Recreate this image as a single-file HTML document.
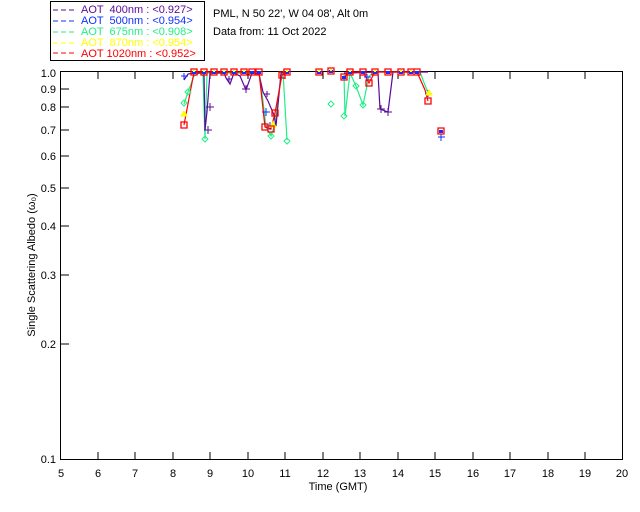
<!DOCTYPE html>
<html><head><meta charset="utf-8"><style>
html,body{margin:0;padding:0;background:#fff;width:640px;height:512px;overflow:hidden}
svg{display:block}
text{font-family:"Liberation Sans",sans-serif;font-size:11px;white-space:pre}
</style></head><body>
<svg width="640" height="512" viewBox="0 0 640 512" xmlns="http://www.w3.org/2000/svg">
<rect x="50.5" y="1.5" width="154" height="59" fill="none" stroke="#000"/>
<g font-size="11">
<line x1="53" y1="10" x2="77" y2="10" stroke="#5a0a9a" stroke-dasharray="5,3"/><text x="81" y="13" fill="#5a0a9a">AOT  400nm : &lt;0.927&gt;</text>
<line x1="53" y1="21" x2="77" y2="21" stroke="#1030ff" stroke-dasharray="5,3"/><text x="81" y="24" fill="#1030ff">AOT  500nm : &lt;0.954&gt;</text>
<line x1="53" y1="32" x2="77" y2="32" stroke="#22ee88" stroke-dasharray="5,3"/><text x="81" y="35" fill="#22ee88">AOT  675nm : &lt;0.908&gt;</text>
<line x1="53" y1="43" x2="77" y2="43" stroke="#ffff00" stroke-dasharray="5,3"/><text x="81" y="46" fill="#ffff00">AOT  870nm : &lt;0.954&gt;</text>
<line x1="53" y1="53" x2="77" y2="53" stroke="#ff0000" stroke-dasharray="5,3"/><text x="81" y="57" fill="#ff0000">AOT 1020nm : &lt;0.952&gt;</text>
</g>
<text x="213" y="17">PML, N 50 22', W 04 08', Alt 0m</text>
<text x="213" y="35">Data from: 11 Oct 2022</text>
<rect x="60.5" y="71.5" width="562" height="388" fill="none" stroke="#000"/>
<g stroke="#000">
<path d="M98 72v7M135 72v7M173 72v7M210 72v7M248 72v7M285 72v7M323 72v7M360 72v7M398 72v7M435 72v7M473 72v7M510 72v7M548 72v7M585 72v7"/>
<path d="M98 459v-7M135 459v-7M173 459v-7M210 459v-7M248 459v-7M285 459v-7M323 459v-7M360 459v-7M398 459v-7M435 459v-7M473 459v-7M510 459v-7M548 459v-7M585 459v-7"/>
<path d="M61 89h8M61 107h8M61 130h8M61 156h8M61 188h8M61 226h8M61 275h8M61 344h8"/>
</g>
<g font-size="11" text-anchor="end">
<text x="56" y="77">1.0</text><text x="56" y="93">0.9</text><text x="56" y="111">0.8</text><text x="56" y="134">0.7</text><text x="56" y="160">0.6</text><text x="56" y="192">0.5</text><text x="56" y="230">0.4</text><text x="56" y="279">0.3</text><text x="56" y="348">0.2</text><text x="56" y="463">0.1</text>
</g>
<g font-size="11" text-anchor="middle">
<text x="61" y="477">5</text><text x="98" y="477">6</text><text x="135" y="477">7</text><text x="173" y="477">8</text><text x="210" y="477">9</text><text x="248" y="477">10</text><text x="285" y="477">11</text><text x="323" y="477">12</text><text x="360" y="477">13</text><text x="398" y="477">14</text><text x="435" y="477">15</text><text x="473" y="477">16</text><text x="510" y="477">17</text><text x="548" y="477">18</text><text x="585" y="477">19</text><text x="622" y="477">20</text>
<text x="338" y="490">Time (GMT)</text>
</g>
<text transform="translate(35,265) rotate(-90)" text-anchor="middle" font-size="11">Single Scattering Albedo (ω₀)</text>
<g fill="none" stroke-width="1.2">
<polyline stroke="#22ee88" points="184,104 188,92 194,76 200,73 203,76 205,139 207,73 214,73 224,73 234,73 244,73 252,73 259,74 263,101 266,127 271,136 275,124 281,76 283,72 287,140"/>
<polyline stroke="#22ee88" points="344,75 345,116 350,73 356,86 363,105 369,76 375,72 420,72 428,93"/>
<polyline stroke="#5a0a9a" points="184,80 188,74 194,73 204,73 205,130 207,112 210,73 224,73 226,78 230,84 234,73 240,76 246,90 252,73 259,74 263,92 268,101 274,115 276,126 281,73 287,72"/>
<polyline stroke="#5a0a9a" points="344,73 350,73 375,72 378,73 380,109 388,112 393,72 428,72"/>
<polyline stroke="#ff0000" points="184,125 194,72 204,72 214,72 224,72 234,72 244,72 252,72 259,72 265,127 271,129 275,113 282,75 287,72"/>
<polyline stroke="#ff0000" points="344,77 350,72 356,72 363,72 369,83 375,72 417,72 425,90 428,101"/>
</g>
<g fill="none" stroke="#22ee88">
<path d="M184 100l3 3-3 3-3-3zM188 89l3 3-3 3-3-3zM205 136l3 3-3 3-3-3zM271 133l3 3-3 3-3-3zM287 138l3 3-3 3-3-3zM331 101l3 3-3 3-3-3zM344 113l3 3-3 3-3-3zM356 83l3 3-3 3-3-3zM363 102l3 3-3 3-3-3z"/>
</g>
<g stroke="#5a0a9a">
<path d="M204 130h8M208 126v8M206 107h8M210 103v8M226 79h6M229 76v6M242 89h8M246 85v8M264 94h6M267 91v6M377 109h8M381 105v8M384 112h8M388 108v8"/>
</g>
<g stroke="#1030ff">
<path d="M181 76h7M184 73v7M262 112h8M266 108v8M266 126h8M270 122v8M425 94h7M428 90v7M438 137h7M441 134v7M364 77h7M367 74v7"/>
</g>
<g fill="#ffff00" stroke="#ffff00">
<path d="M184 111l3 5h-6zM273 122l3 5h-6zM429 90l3 5h-6z"/>
</g>
<g fill="#1030ff">
<path d="M192 71h4v3h-4zM202 71h4v3h-4zM212 71h4v3h-4zM222 71h4v3h-4zM232 71h4v3h-4zM242 71h4v3h-4zM250 71h4v3h-4zM257 71h4v3h-4zM285 71h4v3h-4zM317 71h4v3h-4zM329 70h4v3h-4zM348 71h4v3h-4zM361 71h4v3h-4zM373 71h4v3h-4zM386 71h4v3h-4zM399 71h4v3h-4zM409 71h4v3h-4zM415 71h4v3h-4zM342 76h4v3h-4zM439 130h4v3h-4z"/>
</g>
<g fill="#ffff00">
<path d="M193 70h2v2h-2zM203 70h2v2h-2zM213 70h2v2h-2zM223 70h2v2h-2zM233 70h2v2h-2zM243 70h2v2h-2zM286 70h2v2h-2zM318 70h2v2h-2zM330 69h2v2h-2zM349 70h2v2h-2zM374 70h2v2h-2zM400 70h2v2h-2zM410 70h2v2h-2z"/>
</g>
<g fill="none" stroke="#ff0000" stroke-width="1.3">
<path d="M181 122h6v6h-6zM191 69h6v6h-6zM201 69h6v6h-6zM211 69h6v6h-6zM221 69h6v6h-6zM231 69h6v6h-6zM241 69h6v6h-6zM249 69h6v6h-6zM256 69h6v6h-6zM262 124h6v6h-6zM268 126h6v6h-6zM272 110h6v6h-6zM279 72h6v6h-6zM284 69h6v6h-6zM316 69h6v6h-6zM328 68h6v6h-6zM341 74h6v6h-6zM347 69h6v6h-6zM360 69h6v6h-6zM366 80h6v6h-6zM372 69h6v6h-6zM385 69h6v6h-6zM398 69h6v6h-6zM408 69h6v6h-6zM414 69h6v6h-6zM425 98h6v6h-6zM438 128h6v6h-6z"/>
</g>
</svg>
</body></html>
